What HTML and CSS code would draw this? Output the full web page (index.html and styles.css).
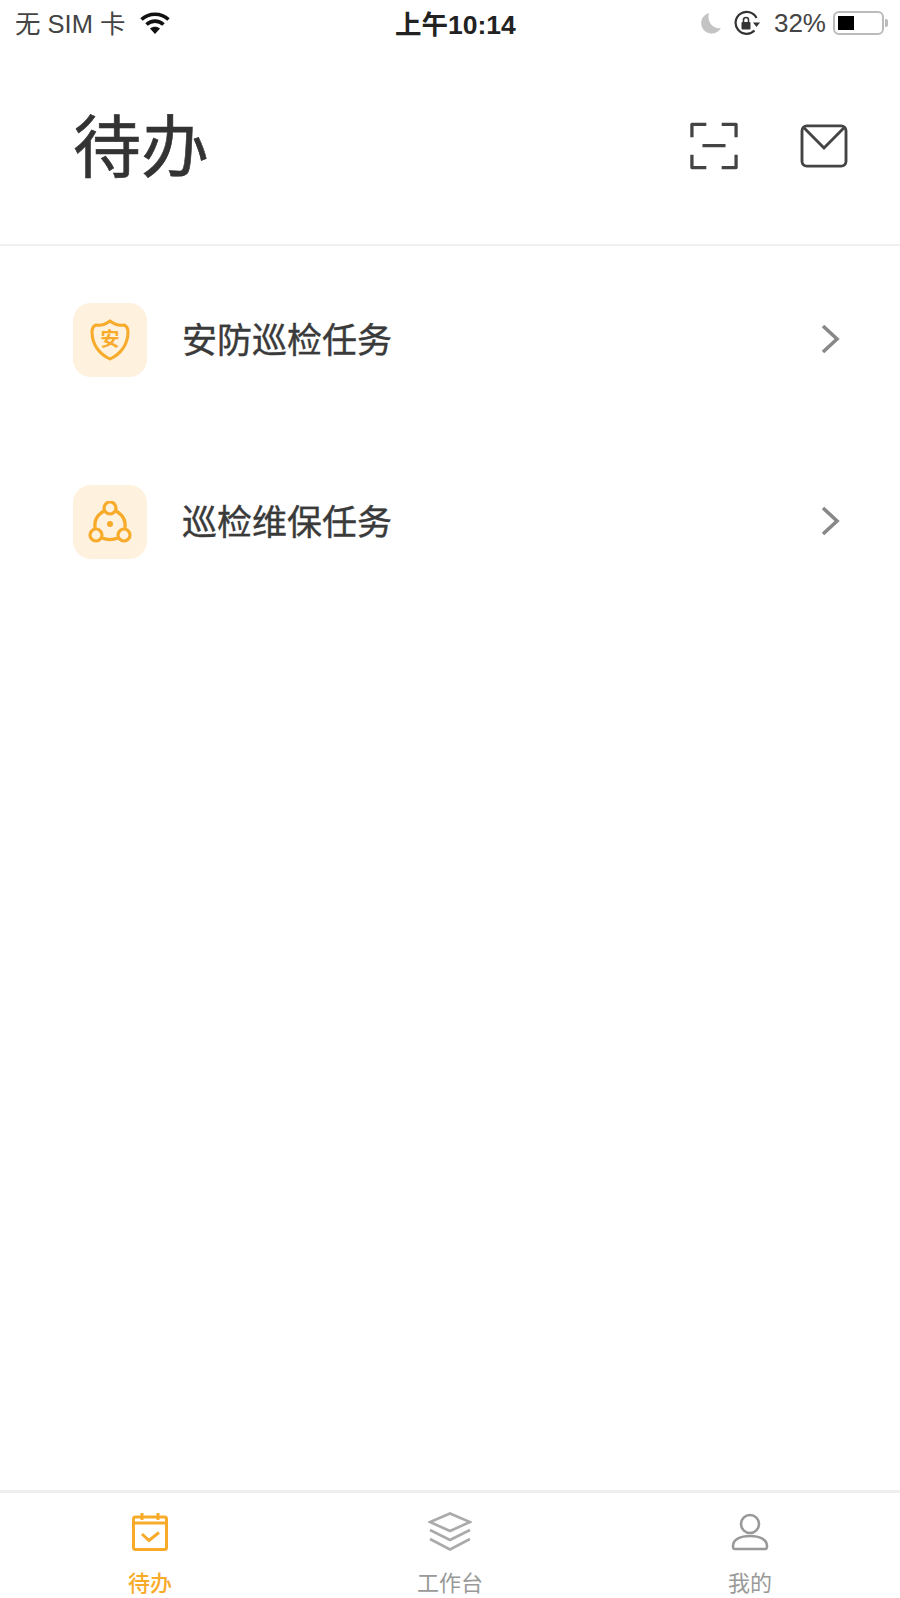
FILE: index.html
```html
<!DOCTYPE html>
<html lang="zh-CN">
<head>
    <meta charset="UTF-8">
    <meta name="viewport" content="width=device-width, initial-scale=1.0">
    <title>待办</title>
    <link rel="stylesheet" href="styles.css">
</head>
<body>
<div class="page">
  <!-- Status Bar -->
  <div class="status-bar">
    <div class="status-left">
      <span class="status-text">无 SIM 卡</span>
      <svg class="status-icon" viewBox="0 0 32 24" width="32" height="24">
        <path d="M2.500 8.500C10 1.500 22 1.500 29.500 8.500" fill="none" stroke="#111" stroke-width="3.600"/>
        <path d="M7.500 13.500C12.500 9 19.500 9 24.500 13.500" fill="none" stroke="#111" stroke-width="3.600"/>
        <path d="M11 17.500C14 15 18 15 21 17.500L16 23Z" fill="#111"/>
      </svg>
    </div>
    <div class="status-time">上午10:14</div>
    <div class="status-right">
      <svg class="status-icon moon-icon" viewBox="0 0 22 22" width="22" height="22">
        <path d="M9 1A10.500 10.500 0 1 0 21 16C13.500 17.500 6.500 10 9 1Z" fill="#c4c4c4"/>
      </svg>
      <svg class="status-icon lock-icon" viewBox="0 0 28 26" width="28" height="26">
        <path d="M21.500 20.500A11 11 0 1 1 23.500 8" fill="none" stroke="#333" stroke-width="2.200"/>
        <path d="M20 12.500L27 12.500L23.500 17Z" fill="#333"/>
        <rect x="8.500" y="12" width="9" height="7.500" rx="1" fill="#333"/>
        <path d="M10.500 12.500V10A2.500 2.500 0 0 1 15.500 10V12.500" fill="none" stroke="#333" stroke-width="1.600"/>
      </svg>
      <span class="status-percent">32%</span>
      <div class="battery">
        <div class="battery-body"><div class="battery-level"></div></div>
        <div class="battery-cap"></div>
      </div>
    </div>
  </div>

  <!-- Header -->
  <div class="header">
    <h1>待办</h1>
    <div class="header-icons">
      <svg viewBox="0 0 50 50" width="48" height="48">
        <path d="M2 16V2.500H17M33 2.500H48V16M2 34V47.500H17M33 47.500H48V34M13 24.500H37" fill="none" stroke="#444" stroke-width="3.400" stroke-linejoin="round"/>
      </svg>
      <svg viewBox="0 0 50 46" width="48" height="44">
        <rect x="2" y="2" width="46" height="42" rx="5" fill="none" stroke="#444" stroke-width="3"/>
        <path d="M4 4L25 25L46 4" fill="none" stroke="#444" stroke-width="3"/>
      </svg>
    </div>
  </div>

  <!-- Task List -->
  <div class="task-list">
    <div class="task-row">
      <div class="task-icon">
        <svg viewBox="0 0 40 42" width="40" height="42">
          <path d="M20 2C16 5 11 7 6 6C3 7 2 10 2 13C2 25 9 35 20 40C31 35 38 25 38 13C38 10 37 7 34 6C29 7 24 5 20 2Z" fill="none" stroke="#f8ab2a" stroke-width="3"/>
          <text x="20" y="27" class="shield-text">安</text>
        </svg>
      </div>
      <span class="task-name">安防巡检任务</span>
      <svg class="chevron" viewBox="0 0 20 30" width="20" height="30">
        <path d="M3 2L17 15L3 28" fill="none" stroke="#888" stroke-width="3.600"/>
      </svg>
    </div>
    <div class="task-row">
      <div class="task-icon">
        <svg viewBox="0 0 44 42" width="44" height="42">
          <path d="M16 10C9 14 6 20 7 27M28 10C35 14 38 20 37 27M14 37C19 39 25 39 30 37" fill="none" stroke="#f8ab2a" stroke-width="3.200"/>
          <circle cx="22" cy="7" r="6" fill="none" stroke="#f8ab2a" stroke-width="3.200"/>
          <circle cx="8" cy="34" r="6" fill="none" stroke="#f8ab2a" stroke-width="3.200"/>
          <circle cx="36" cy="34" r="6" fill="none" stroke="#f8ab2a" stroke-width="3.200"/>
          <circle cx="22" cy="23" r="3" fill="#f8ab2a"/>
        </svg>
      </div>
      <span class="task-name">巡检维保任务</span>
      <svg class="chevron" viewBox="0 0 20 30" width="20" height="30">
        <path d="M3 2L17 15L3 28" fill="none" stroke="#888" stroke-width="3.600"/>
      </svg>
    </div>
  </div>

  <!-- Tab Bar -->
  <div class="tab-bar">
    <div class="tab tab-active">
      <div class="tab-icon">
        <svg viewBox="0 0 36 38" width="36" height="38">
          <rect x="1.500" y="4" width="33" height="32.500" rx="2" fill="none" stroke="#f8ab2a" stroke-width="3"/>
          <path d="M2 10H34M10 0V7M26 0V7M10 21L17 27.500L27 19.500" fill="none" stroke="#f8ab2a" stroke-width="3"/>
        </svg>
      </div>
      <span>待办</span>
    </div>
    <div class="tab">
      <div class="tab-icon">
        <svg viewBox="0 0 44 40" width="44" height="40">
          <path d="M22 1.500L42 10L22 19L2 10Z" fill="none" stroke="#aaa" stroke-width="2.600"/>
          <path d="M2 18L22 28L42 18M2 27L22 37.500L42 27" fill="none" stroke="#aaa" stroke-width="2.600"/>
        </svg>
      </div>
      <span>工作台</span>
    </div>
    <div class="tab">
      <div class="tab-icon">
        <svg viewBox="0 0 38 38" width="38" height="38">
          <circle cx="19" cy="11" r="9" fill="none" stroke="#999" stroke-width="2.600"/>
          <path d="M4 36C2 36 2 35 2 33C2 26 10 23 19 23C28 23 36 26 36 33C36 35 36 36 34 36Z" fill="none" stroke="#999" stroke-width="2.600"/>
        </svg>
      </div>
      <span>我的</span>
    </div>
  </div>
</div>
</body>
</html>
```

FILE: styles.css
```css
* {
  box-sizing: border-box;
}

body {
  margin: 0;
  background-color: #ffffff;
  font-family: "Liberation Sans", "Noto Sans CJK SC", sans-serif;
  color: #333;
}

.page {
  height: 1598px;
  display: flex;
  flex-direction: column;
}

/* Status Bar */
.status-bar {
  height: 48px;
  padding: 0 12px 0 15px;
  display: flex;
  align-items: center;
  justify-content: space-between;
  position: relative;
  font-size: 25.5px;
}

.status-text {
  margin-bottom: 6px;
}

.status-percent {
  margin-bottom: 2px;
  font-size: 26px;
}

.status-icon {
  margin-bottom: 2px;
}

.status-left {
  display: flex;
  align-items: center;
  gap: 13px;
  color: #444;
}

.status-time {
  position: absolute;
  left: 395px;
  top: 3px;
  font-weight: bold;
  font-size: 26.5px;
  color: #222;
}

.status-right {
  display: flex;
  align-items: center;
  gap: 12px;
  color: #444;
}

.moon-icon {
  margin-right: -1px;
}

.lock-icon {
  margin-right: 1px;
}

.battery {
  display: flex;
  align-items: center;
  gap: 1px;
  margin: 0 0 2px -5px;
}

.battery-body {
  width: 51px;
  height: 24px;
  padding: 3px;
  border: 2px solid #bbb;
  border-radius: 6px;
}

.battery-level {
  width: 16px;
  height: 100%;
  background-color: #000;
}

.battery-cap {
  width: 3px;
  height: 8px;
  background-color: #bbb;
  border-radius: 0 2px 2px 0;
}

/* Header */
.header {
  height: 198px;
  padding: 0 52px 0 73px;
  display: flex;
  align-items: center;
  justify-content: space-between;
  border-bottom: 2px solid #f0f0f0;
}

.header h1 {
  margin: 0 0 8px;
  font-size: 68px;
  font-weight: normal;
  color: #333;
  -webkit-text-stroke: 0.6px #333;
}

.header-icons {
  display: flex;
  align-items: center;
  gap: 62px;
}

/* Task List */
.task-list {
  flex: 1;
  padding: 57px 60px 0 73px;
  display: flex;
  flex-direction: column;
  gap: 108px;
}

.task-row {
  display: flex;
  align-items: center;
  gap: 35px;
}

.task-icon {
  width: 74px;
  height: 74px;
  border-radius: 18px;
  background-color: #fef1dd;
  display: flex;
  align-items: center;
  justify-content: center;
}

.shield-text {
  font-size: 19px;
  font-weight: bold;
  fill: #f8ab2a;
  text-anchor: middle;
}

.task-name {
  flex: 1;
  margin-bottom: 6px;
  font-size: 35px;
  color: #3a3a3a;
  -webkit-text-stroke: 0.4px #3a3a3a;
}

.chevron {
  margin-bottom: 3px;
}

/* Tab Bar */
.tab-bar {
  height: 108px;
  border-top: 3px solid #eeeeee;
  display: flex;
}

.tab {
  flex: 1;
  padding-top: 19px;
  display: flex;
  flex-direction: column;
  align-items: center;
  gap: 18px;
  font-size: 22px;
  line-height: 28px;
  color: #999;
}

.tab-icon {
  height: 40px;
  display: flex;
  align-items: center;
}

.tab-active {
  color: #f8ab2a;
  font-weight: 500;
}
```
